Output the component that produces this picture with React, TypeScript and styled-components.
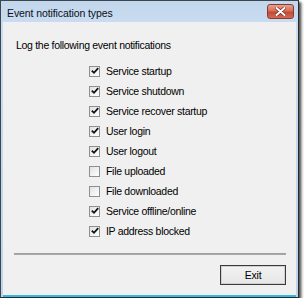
import React, { useState } from "react";
import styled, { createGlobalStyle } from "styled-components";

const GlobalStyle = createGlobalStyle`
  html, body {
    margin: 0;
    padding: 0;
    background: #ffffff;
  }
  body {
    font-family: "Liberation Sans", Arial, sans-serif;
  }
`;

type Evento = { nome: string; ativo: boolean };

const eventosIniciais: Evento[] = [
  { nome: "Service startup", ativo: true },
  { nome: "Service shutdown", ativo: true },
  { nome: "Service recover startup", ativo: true },
  { nome: "User login", ativo: true },
  { nome: "User logout", ativo: true },
  { nome: "File uploaded", ativo: false },
  { nome: "File downloaded", ativo: false },
  { nome: "Service offline/online", ativo: true },
  { nome: "IP address blocked", ativo: true },
];

export default function App() {
  const [eventos, setEventos] = useState<Evento[]>(eventosIniciais);

  // alterna o estado de um item da lista
  const alternar = (indice: number) => {
    setEventos((lista) =>
      lista.map((e, i) => (i === indice ? { ...e, ativo: !e.ativo } : e))
    );
  };

  return (
    <>
      <GlobalStyle />
      <Janela>
        <BarraTitulo>
          <Titulo>Event notification types</Titulo>
          <BotaoFechar aria-label="Close">
            <svg width="11" height="9" viewBox="0 0 11 9">
              <path
                d="M1.5 1 L9.5 8 M9.5 1 L1.5 8"
                stroke="#7a2a1c"
                strokeWidth="3.4"
                strokeLinecap="round"
              />
              <path
                d="M1.5 1 L9.5 8 M9.5 1 L1.5 8"
                stroke="#ffffff"
                strokeWidth="2"
                strokeLinecap="round"
              />
            </svg>
          </BotaoFechar>
        </BarraTitulo>
        <AreaCliente>
          <Introducao>Log the following event notifications</Introducao>
          <Lista>
            {eventos.map((evento, i) => (
              <Linha key={evento.nome} onClick={() => alternar(i)}>
                <Caixa>
                  {evento.ativo && (
                    <svg width="8" height="8" viewBox="0 0 8 8">
                      <path
                        d="M0.8 3.6 L3 5.8 L7.2 1.2"
                        fill="none"
                        stroke="#111"
                        strokeWidth="1.8"
                      />
                    </svg>
                  )}
                </Caixa>
                <Rotulo>{evento.nome}</Rotulo>
              </Linha>
            ))}
          </Lista>
          <Separador />
          <Rodape>
            <BotaoSair>Exit</BotaoSair>
          </Rodape>
        </AreaCliente>
      </Janela>
    </>
  );
}

// Estilização
const Janela = styled.div`
  width: 299px;
  height: 298px;
  border: 1px solid #3c4650;
  border-bottom-color: #2a2a2a;
  border-right-color: #2a2a2a;
  background: linear-gradient(#c2d6ec, #c9dcf1 22px, #bcd4ec);
  box-shadow: 2px 2px 2px rgba(0, 0, 0, 0.55), 3px 3px 3px rgba(0, 0, 0, 0.25);
  display: flex;
  flex-direction: column;
  padding: 0 2px 0 2px;
  box-sizing: border-box;
`;

const BarraTitulo = styled.div`
  height: 21px;
  flex: none;
  display: flex;
  align-items: center;
  justify-content: space-between;
  padding: 0 0 0 4px;
`;

const Titulo = styled.span`
  font-size: 10.5px;
  letter-spacing: -0.1px;
  color: #0a1018;
  margin-top: 2px;
`;

const BotaoFechar = styled.div`
  width: 27px;
  height: 15px;
  margin-top: -1px;
  margin-right: 2px;
  border: 1px solid #8a3a30;
  border-radius: 3px;
  background: linear-gradient(#e8a090, #d46f5a 45%, #c24a33 55%, #d26a55);
  display: flex;
  align-items: center;
  justify-content: center;
  box-sizing: border-box;
`;

const AreaCliente = styled.div`
  flex: 1;
  background: #f0f0f0;
  border-bottom: 2px solid #33b8e6;
  display: flex;
  flex-direction: column;
  padding: 16px 10px 0 13px;
  font-size: 10.5px;
  letter-spacing: -0.3px;
  color: #000;
`;

const Introducao = styled.div`
  line-height: 14px;
`;

const Lista = styled.div`
  display: flex;
  flex-direction: column;
  margin: 9px 0 0 73px;
`;

const Linha = styled.label`
  height: 20px;
  display: flex;
  align-items: center;
  gap: 6px;
  cursor: default;
`;

const Caixa = styled.span`
  width: 9px;
  height: 9px;
  border: 1px solid #8f8f8f;
  background: linear-gradient(135deg, #e2e2e2, #ffffff);
  display: flex;
  align-items: center;
  justify-content: center;
  flex: none;
`;

const Rotulo = styled.span`
  line-height: 14px;
`;

const Separador = styled.div`
  margin-top: 12px;
  margin-left: -2px;
  height: 0;
  border-top: 1px solid #a0a0a0;
  border-bottom: 1px solid #a8a8a8;
`;

const Rodape = styled.div`
  display: flex;
  justify-content: flex-end;
  margin-top: 10px;
`;

const BotaoSair = styled.button`
  width: 66px;
  height: 20px;
  border: 1px solid #3a3a3a;
  box-shadow: inset 0 0 0 1px #d0d0d0;
  background: linear-gradient(#f2f2f2, #e6e6e6);
  font-family: "Liberation Sans", Arial, sans-serif;
  font-size: 10.5px;
  letter-spacing: -0.2px;
  color: #000;
  padding: 0;
`;
